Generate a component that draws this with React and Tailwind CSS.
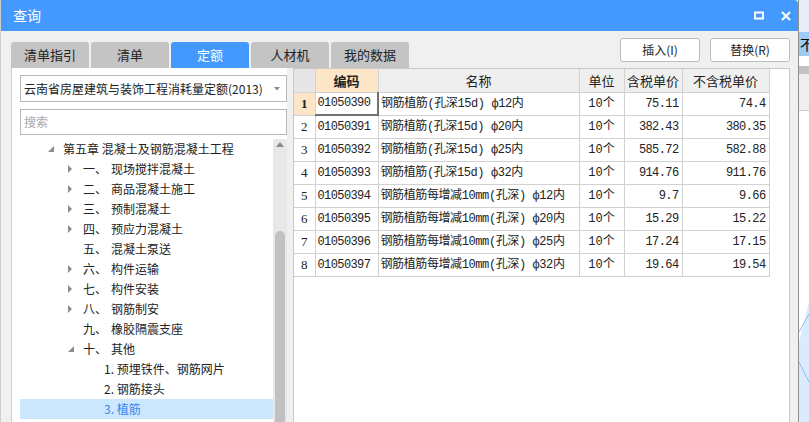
import React from 'react'

const ui = { fontFamily: '"Noto Sans CJK SC", "Noto Sans", sans-serif' }
const cellFont = { fontFamily: '"Liberation Mono", "Noto Sans CJK SC", monospace' }

const tabs = ['清单指引', '清单', '定额', '人材机', '我的数据']

const tree = [
  { lv: 1, arrow: 'open', text: '第五章 混凝土及钢筋混凝土工程' },
  { lv: 2, arrow: 'closed', num: '一、', text: '现场搅拌混凝土' },
  { lv: 2, arrow: 'closed', num: '二、', text: '商品混凝土施工' },
  { lv: 2, arrow: 'closed', num: '三、', text: '预制混凝土' },
  { lv: 2, arrow: 'closed', num: '四、', text: '预应力混凝土' },
  { lv: 2, arrow: 'none', num: '五、', text: '混凝土泵送' },
  { lv: 2, arrow: 'closed', num: '六、', text: '构件运输' },
  { lv: 2, arrow: 'closed', num: '七、', text: '构件安装' },
  { lv: 2, arrow: 'closed', num: '八、', text: '钢筋制安' },
  { lv: 2, arrow: 'none', num: '九、', text: '橡胶隔震支座' },
  { lv: 2, arrow: 'open', num: '十、', text: '其他' },
  { lv: 3, text: '1. 预埋铁件、钢筋网片' },
  { lv: 3, text: '2. 钢筋接头' },
  { lv: 3, text: '3. 植筋', sel: true },
]

const rows = [
  ['01050390', '钢筋植筋(孔深15d) ф12内', '10个', '75.11', '74.4'],
  ['01050391', '钢筋植筋(孔深15d) ф20内', '10个', '382.43', '380.35'],
  ['01050392', '钢筋植筋(孔深15d) ф25内', '10个', '585.72', '582.88'],
  ['01050393', '钢筋植筋(孔深15d) ф32内', '10个', '914.76', '911.76'],
  ['01050394', '钢筋植筋每增减10mm(孔深) ф12内', '10个', '9.7', '9.66'],
  ['01050395', '钢筋植筋每增减10mm(孔深) ф20内', '10个', '15.29', '15.22'],
  ['01050396', '钢筋植筋每增减10mm(孔深) ф25内', '10个', '17.24', '17.15'],
  ['01050397', '钢筋植筋每增减10mm(孔深) ф32内', '10个', '19.64', '19.54'],
]

const Arrow = ({ type }) => (
  <svg width="18" height="8" className="shrink-0">
    {type === 'closed' && <polygon points="3,0 7,4 3,8" fill="#8c8c8c" />}
    {type === 'open' && <polygon points="9,1 9,7 3,7" fill="#8c8c8c" />}
  </svg>
)

const TreeRow = ({ item }) => {
  const pad = item.lv === 1 ? 'pl-[25px]' : item.lv === 2 ? 'pl-[45px]' : 'pl-[84px]'
  return (
    <div
      className={`h-[20px] flex items-center text-[12px] whitespace-nowrap ${pad} ${
        item.sel ? 'bg-[#cce8ff] text-[#3a86ee]' : 'text-[#222]'
      }`}
    >
      {item.lv < 3 && <Arrow type={item.arrow} />}
      {item.num && <span className="w-[28px] shrink-0">{item.num}</span>}
      <span>{item.text}</span>
    </div>
  )
}

export default function App() {
  return (
    <div className="w-[809px] h-[422px] overflow-hidden flex bg-white" style={ui}>
      {/* dialog */}
      <div className="w-[799px] h-full flex flex-col bg-[#f0f0f0] border-l border-[#cfcfcf] border-r border-r-[#8f8f8f]">
        {/* title bar */}
        <div className="h-[31px] shrink-0 bg-[#4499ff] rounded-tr-[4px] flex items-center pl-[12px] pr-[7px] text-white">
          <span className="text-[14px]">查询</span>
          <div className="ml-auto flex items-center gap-[17px]">
            <svg width="10" height="9" viewBox="0 0 10 9">
              <rect x="1" y="1.5" width="8" height="6" fill="none" stroke="#fff" strokeWidth="2" />
            </svg>
            <svg width="10" height="10" viewBox="0 0 10 10">
              <path d="M1 1 L9 9 M9 1 L1 9" stroke="#fff" strokeWidth="2.2" />
            </svg>
          </div>
        </div>

        {/* tabs + buttons */}
        <div className="h-[37px] shrink-0 flex pl-[10px] pr-[8px]">
          <div className="flex gap-[2px] mt-[11px]">
            {tabs.map((t) => (
              <div
                key={t}
                className={`w-[78px] h-[26px] rounded-t-[3px] flex items-center justify-center text-[13px] ${
                  t === '定额' ? 'bg-[#4499ff] text-white' : 'bg-[#c4c4c4] text-[#222]'
                }`}
              >
                {t}
              </div>
            ))}
          </div>
          <div className="ml-auto flex gap-[10px] mt-[7px]">
            {['插入(I)', '替换(R)'].map((b) => (
              <button
                key={b}
                className="w-[80px] h-[24px] bg-white border border-[#bdbdbd] rounded-[3px] text-[12px] text-[#222] flex items-center justify-center"
              >
                {b}
              </button>
            ))}
          </div>
        </div>

        {/* panels */}
        <div className="flex-1 flex pl-[10px] pr-[8px] gap-[6px] min-h-0">
          {/* left panel */}
          <div className="w-[276px] bg-white border-l border-[#cfcfcf] pl-[8px] pt-[7px] flex flex-col min-h-0">
            <div className="h-[27px] border border-[#b8b8b8] flex items-center pl-[3px] pr-[6px] text-[12px] text-[#222]">
              <span className="whitespace-nowrap">云南省房屋建筑与装饰工程消耗量定额(2013)</span>
              <svg width="6" height="4" className="ml-auto">
                <polygon points="0,0 6,0 3,3.5" fill="#8a8a8a" />
              </svg>
            </div>
            <div className="h-[26px] mt-[7px] border border-[#b8b8b8] flex items-center pl-[3px] text-[12px] text-[#a8a8a8]">
              搜索
            </div>
            <div className="flex-1 mt-[4px] flex min-h-0 overflow-hidden">
              <div className="flex-1 flex flex-col">
                {tree.map((it, i) => (
                  <TreeRow key={i} item={it} />
                ))}
              </div>
              <div className="w-[14px] bg-[#e8e8e8] flex flex-col items-center">
                <svg width="8" height="5" className="mt-[3px]">
                  <polygon points="0,5 8,5 4,0" fill="#8a8a8a" />
                </svg>
                <div className="w-[10px] flex-1 mt-[84px] bg-[#c1c1c1] rounded-t-full" />
              </div>
            </div>
          </div>

          {/* right panel */}
          <div className="flex-1 bg-white border border-[#c8c8c8] border-b-0">
            <table className="table-fixed border-collapse text-[12px] text-[#222]">
              <colgroup>
                <col className="w-[21px]" />
                <col className="w-[63px]" />
                <col className="w-[201px]" />
                <col className="w-[45px]" />
                <col className="w-[58px]" />
                <col className="w-[87px]" />
              </colgroup>
              <thead>
                <tr className="h-[23px]">
                  <th className="border border-[#d2d2d2] border-t-0 border-l-0 bg-[#e6e6e6]" />
                  <th className="border border-[#d2d2d2] border-t-0 bg-[#fde6c8] font-bold text-[13px]">编码</th>
                  <th className="border border-[#d2d2d2] border-t-0 bg-[#efefef] font-normal text-[13px]">名称</th>
                  <th className="border border-[#d2d2d2] border-t-0 bg-[#efefef] font-normal text-[13px]">单位</th>
                  <th className="border border-[#d2d2d2] border-t-0 bg-[#efefef] font-normal text-[13px]">含税单价</th>
                  <th className="border border-[#d2d2d2] border-t-0 bg-[#efefef] font-normal text-[13px]">不含税单价</th>
                </tr>
              </thead>
              <tbody style={cellFont}>
                {rows.map((r, i) => (
                  <tr key={r[0]} className="h-[23px]">
                    <td
                      className={`border border-[#d2d2d2] border-l-0 text-center text-[13px] ${
                        i === 0 ? 'bg-[#fde6c8] font-bold' : ''
                      }`}
                      style={{ fontFamily: '"Liberation Serif", serif' }}
                    >
                      {i + 1}
                    </td>
                    <td
                      className={`border pl-[2px] tracking-[-0.6px] whitespace-nowrap overflow-hidden ${
                        i === 0
                          ? 'border-[#d2d2d2] border-l-[#4499ff] border-r-2 border-r-[#707070] border-b-2 border-b-[#707070]'
                          : 'border-[#d2d2d2]'
                      }`}
                    >
                      {r[0]}
                    </td>
                    <td className="border border-[#d2d2d2] pl-[2px] tracking-[-0.4px] whitespace-pre overflow-hidden">
                      {r[1]}
                    </td>
                    <td className="border border-[#d2d2d2] text-center">{r[2]}</td>
                    <td className="border border-[#d2d2d2] text-right pr-[3px] tracking-[-0.6px]">{r[3]}</td>
                    <td className="border border-[#d2d2d2] text-right pr-[3px] tracking-[-0.6px]">{r[4]}</td>
                  </tr>
                ))}
              </tbody>
            </table>
          </div>
        </div>
      </div>

      {/* background application peeking out */}
      <div className="w-[10px] h-full flex flex-col overflow-hidden">
        <div className="h-[32px] bg-[#e6edf9]" />
        <div className="h-[24px] bg-[#9fcaf3] pl-[1px] text-[14px] leading-[24px] text-black whitespace-nowrap overflow-hidden">
          不
        </div>
        <div className="h-[10px] bg-white" />
        <div className="h-[8px] bg-[#c2c2c2]" />
        <div className="h-[37px] bg-[#efefef] border-b border-[#c8c8c8]" />
        <div className="flex-1 bg-white relative">
          <svg width="10" height="120" className="absolute left-0 bottom-0">
            <polygon points="10,0 10,120 0,120 0,40" fill="#dbeafc" />
            <path d="M10 12 L0 30 M10 80 L0 60" stroke="#8dbdf5" strokeWidth="1" />
          </svg>
        </div>
      </div>
    </div>
  )
}
